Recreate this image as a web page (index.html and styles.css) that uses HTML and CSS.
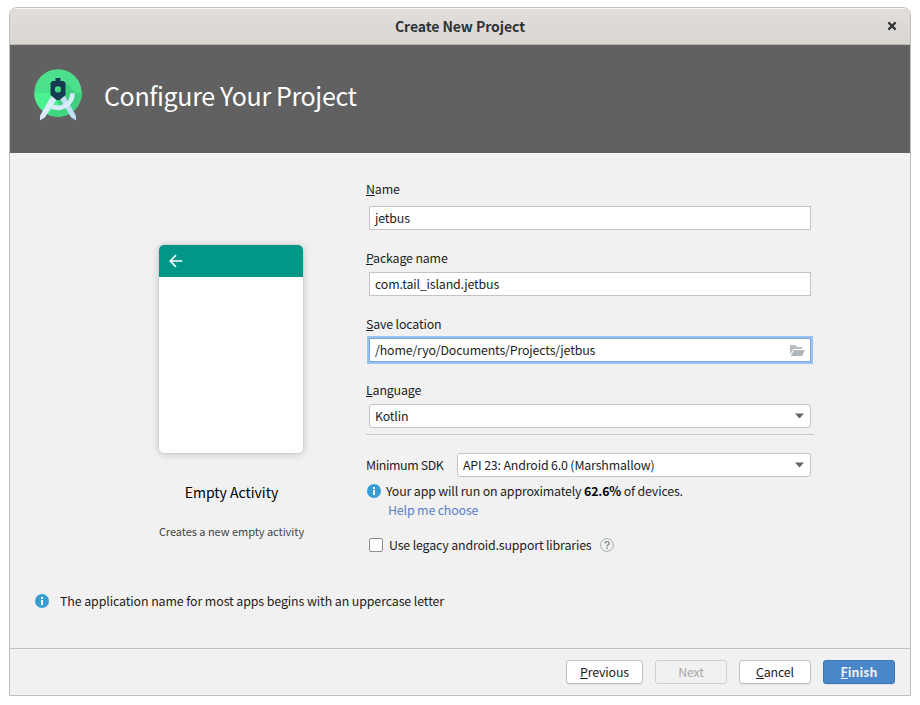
FILE: index.html
```html
<!DOCTYPE html>
<html lang="en">
<head>
<meta charset="utf-8">
<title>Create New Project</title>
<link rel="stylesheet" href="styles.css">
</head>
<body>
<div class="window">
  <div class="titlebar">
    <div class="title">Create New Project</div>
    <svg class="close" width="10" height="10" viewBox="0 0 10 10"><path d="M1.4 1.4L8.6 8.6M8.6 1.4L1.4 8.6" stroke="#2e3436" stroke-width="2.2" fill="none"/></svg>
  </div>
  <div class="banner">
    <svg class="logo" width="48" height="54" viewBox="0 0 48 54">
      <defs>
        <clipPath id="disc"><circle cx="24" cy="24" r="23.8"/></clipPath>
      </defs>
      <g clip-path="url(#disc)">
        <rect width="48" height="24" fill="#4be18c"/>
        <rect y="24" width="48" height="24" fill="#4af28d"/>
        <path d="M31 13L42 24H48V48H30L20 24Z" fill="#3fd07f"/>
        <path d="M12 48L20 38H31L36 48Z" fill="#40d680"/>
      </g>
      <path d="M31 27L41.800 46.500L42.200 51.500L37.200 48.500L26 29.500Z" fill="#bfe0f5"/>
      <path d="M38.500 24.200A14.500 14.500 0 0 1 15 35.500" fill="none" stroke="#d8ecfc" stroke-width="4.600"/>
      <path d="M17.800 26L6.200 46.500L5.800 51.500L10.800 48.500L23.500 29Z" fill="#d8ecfc"/>
      <path fill-rule="evenodd" d="M21.500 9H26.500V12H29.500L31.500 14V26L25.500 31H22.500L16.500 26V14L18.500 12H21.500ZM24 17.300A3.100 3.100 0 1 0 24 23.500A3.100 3.100 0 1 0 24 17.300Z" fill="#163b50"/>
    </svg>
    <h1 class="heading">Configure Your Project</h1>
  </div>
  <div class="content">
    <div class="preview">
      <div class="phone">
        <div class="appbar">
          <svg width="14" height="14" viewBox="0 0 14 14"><path d="M13.200 7H1.500M7 1.200L1.300 7L7 12.800" fill="none" stroke="#fff" stroke-width="1.700"/></svg>
        </div>
      </div>
      <div class="activity">Empty Activity</div>
      <div class="description">Creates a new empty activity</div>
    </div>
    <div class="form">
      <div class="label label-name"><u>N</u>ame</div>
      <div class="field">jetbus</div>
      <div class="label"><u>P</u>ackage name</div>
      <div class="field">com.tail_island.jetbus</div>
      <div class="label"><u>S</u>ave location</div>
      <div class="field focused"><span>/home/ryo/Documents/Projects/jetbus</span>
        <svg width="15" height="11" viewBox="0 0 15 11"><path d="M0 0H5L7 2H12V4H3.500L0 9.800Z" fill="#b6bcc0"/><path d="M4 5H15L12 11H0.800Z" fill="#afb6ba"/></svg>
      </div>
      <div class="label"><u>L</u>anguage</div>
      <div class="field combo"><span>Kotlin</span>
        <svg width="10" height="6" viewBox="0 0 10 6"><path d="M0 0.500H9L4.500 5.500Z" fill="#656565"/></svg>
      </div>
      <div class="divider"></div>
      <div class="sdk-row">
        <div class="sdk-label">Minimum SDK</div>
        <div class="field combo sdk"><span>API 23: Android 6.0 (Marshmallow)</span>
          <svg width="10" height="6" viewBox="0 0 10 6"><path d="M0 0.500H9L4.500 5.500Z" fill="#656565"/></svg>
        </div>
      </div>
      <div class="info-row">
        <svg width="14" height="14" viewBox="0 0 14 14"><circle cx="7" cy="7" r="7" fill="#389fd6"/><path d="M6 3H8V5H6ZM6 6H8V11H6Z" fill="#fff"/></svg>
        <span>Your app will run on approximately <b>62.6%</b> of devices.</span>
      </div>
      <div class="help-link">Help me choose</div>
      <div class="check-row">
        <span class="checkbox"></span>
        <span class="check-label">Use legacy android.support libraries</span>
        <svg width="14" height="14" viewBox="0 0 14 14"><circle cx="7" cy="7" r="6.400" fill="none" stroke="#a4adb2"/><path d="M4.900 5.600C4.900 4.200 5.800 3.600 7 3.600S9.200 4.300 9.200 5.400C9.200 6.700 7.100 6.800 7.100 8.400" fill="none" stroke="#7f8b91" stroke-width="1.400"/><rect x="6.300" y="9.300" width="1.500" height="1.500" fill="#7f8b91"/></svg>
      </div>
    </div>
  </div>
  <div class="message">
    <svg width="14" height="14" viewBox="0 0 14 14"><circle cx="7" cy="7" r="7" fill="#389fd6"/><path d="M6 3H8V5H6ZM6 6H8V11H6Z" fill="#fff"/></svg>
    <span>The application name for most apps begins with an uppercase letter</span>
  </div>
  <div class="footer">
    <div class="button previous"><span><u>P</u>revious</span></div>
    <div class="button disabled">Next</div>
    <div class="button"><span><u>C</u>ancel</span></div>
    <div class="button primary"><span><u>F</u>inish</span></div>
  </div>
</div>
</body>
</html>
```

FILE: styles.css
```css
* {
  box-sizing: border-box;
}

body {
  margin: 0;
  padding: 7px 9px;
  background: #fff;
  color: #1d1d1d;
  font: 12.4px/20px "Noto Sans CJK JP", sans-serif;
  letter-spacing: -.16px;
  white-space: nowrap;
}

svg {
  display: block;
  flex: none;
}

u {
  text-decoration: underline;
  text-decoration-thickness: 1px;
  text-underline-offset: 1px;
}

.window {
  display: flex;
  flex-direction: column;
  width: 902px;
  height: 689px;
  border: 1px solid #c0c0c0;
  border-radius: 8px 8px 0 0;
  background: #f1f1f1;
  overflow: hidden;
}

.titlebar {
  display: grid;
  grid-template-columns: 1fr auto 1fr;
  align-items: center;
  height: 37px;
  padding-right: 13px;
  border-bottom: 1px solid #bab5ae;
  background: linear-gradient(#e1dedb, #dad6d2);
  box-shadow: inset 0 1px #f9f8f8;
}

.title {
  grid-column: 2;
  padding-left: 13px;
  color: #2e3436;
  font-size: 14px;
  font-weight: 700;
  letter-spacing: -.08px;
}

.close {
  justify-self: end;
}

.banner {
  display: flex;
  height: 108px;
  padding: 24px 24px 0;
  background: #616161;
  color: #fff;
}

.heading {
  margin: 6px 0 0 22px;
  font-size: 25px;
  font-weight: 400;
  line-height: 40px;
  letter-spacing: -.35px;
}

.content {
  display: flex;
  height: 427px;
}

.preview {
  display: flex;
  flex-direction: column;
  align-items: center;
  width: 442px;
  margin-right: -86px;
  padding-top: 92px;
}

.phone {
  width: 144px;
  height: 208px;
  border-radius: 5px;
  background: #fff;
  box-shadow: 0 1px 8px rgba(0, 0, 0, .2), 0 0 2px rgba(0, 0, 0, .12);
  overflow: hidden;
}

.appbar {
  height: 32px;
  padding: 9px 10px;
  background: #009688;
}

.activity {
  margin-top: 29px;
  padding-left: 1px;
  color: #000;
  font-size: 14px;
  letter-spacing: -.02px;
}

.description {
  margin-top: 19px;
  padding-left: 1px;
  color: #444;
  font-size: 11px;
  letter-spacing: -.04px;
}

.form {
  width: 448px;
  padding-top: 26px;
}

.label {
  height: 20px;
  margin: 18px 0 4px;
}

.label-name {
  margin: 0 0 7px;
}

.field {
  display: flex;
  align-items: center;
  justify-content: space-between;
  width: 442px;
  height: 24px;
  margin-left: 3px;
  padding: 0 5px;
  border: 1px solid #c4c4c4;
  background: #fff;
}

.focused {
  border-color: #7aa7d8;
  box-shadow: 0 0 0 2px #97c3f3;
}

.combo {
  border-radius: 3px;
}

.divider {
  height: 1px;
  margin-top: 6px;
  background: #c9c9c9;
}

.sdk-row {
  display: flex;
  align-items: center;
  margin-top: 18px;
}

.sdk-label {
  width: 91px;
  letter-spacing: -.38px;
}

.sdk {
  width: 354px;
  margin-left: 0;
}

.info-row {
  display: flex;
  align-items: center;
  gap: 5px;
  height: 20px;
  margin: 4px 0 0 1px;
}

.info-row b {
  color: #000;
}

.help-link {
  margin: -1px 0 0 22px;
  color: #5a80c7;
}

.check-row {
  display: flex;
  align-items: center;
  height: 20px;
  margin: 15px 0 0 3px;
}

.checkbox {
  flex: none;
  width: 14px;
  height: 14px;
  border: 1px solid #8c8c8c;
  border-radius: 2px;
  background: #fff;
}

.check-label {
  width: 217px;
  padding-left: 6px;
}

.message {
  display: flex;
  align-items: center;
  gap: 11px;
  height: 68px;
  padding: 0 0 26px 25px;
  letter-spacing: -.1px;
}

.message svg {
  margin-top: -1px;
}

.footer {
  display: flex;
  justify-content: flex-end;
  gap: 12px;
  height: 47px;
  padding: 11px 15px 0 0;
  border-top: 1px solid #c0c0c0;
}

.button {
  display: flex;
  align-items: center;
  justify-content: center;
  width: 72px;
  height: 24px;
  border: 1px solid #c0c0c0;
  border-radius: 3px;
  background: #fff;
  box-shadow: 0 1px rgba(0, 0, 0, .06);
}

.previous {
  width: 77px;
}

.disabled {
  border-color: #cfcfcf;
  background: none;
  box-shadow: none;
  color: #a8a8a8;
}

.primary {
  border-color: #3d75b8;
  background: #4a86c8;
  color: #f0f0f0;
  font-weight: 700;
  letter-spacing: 0;
}
```
